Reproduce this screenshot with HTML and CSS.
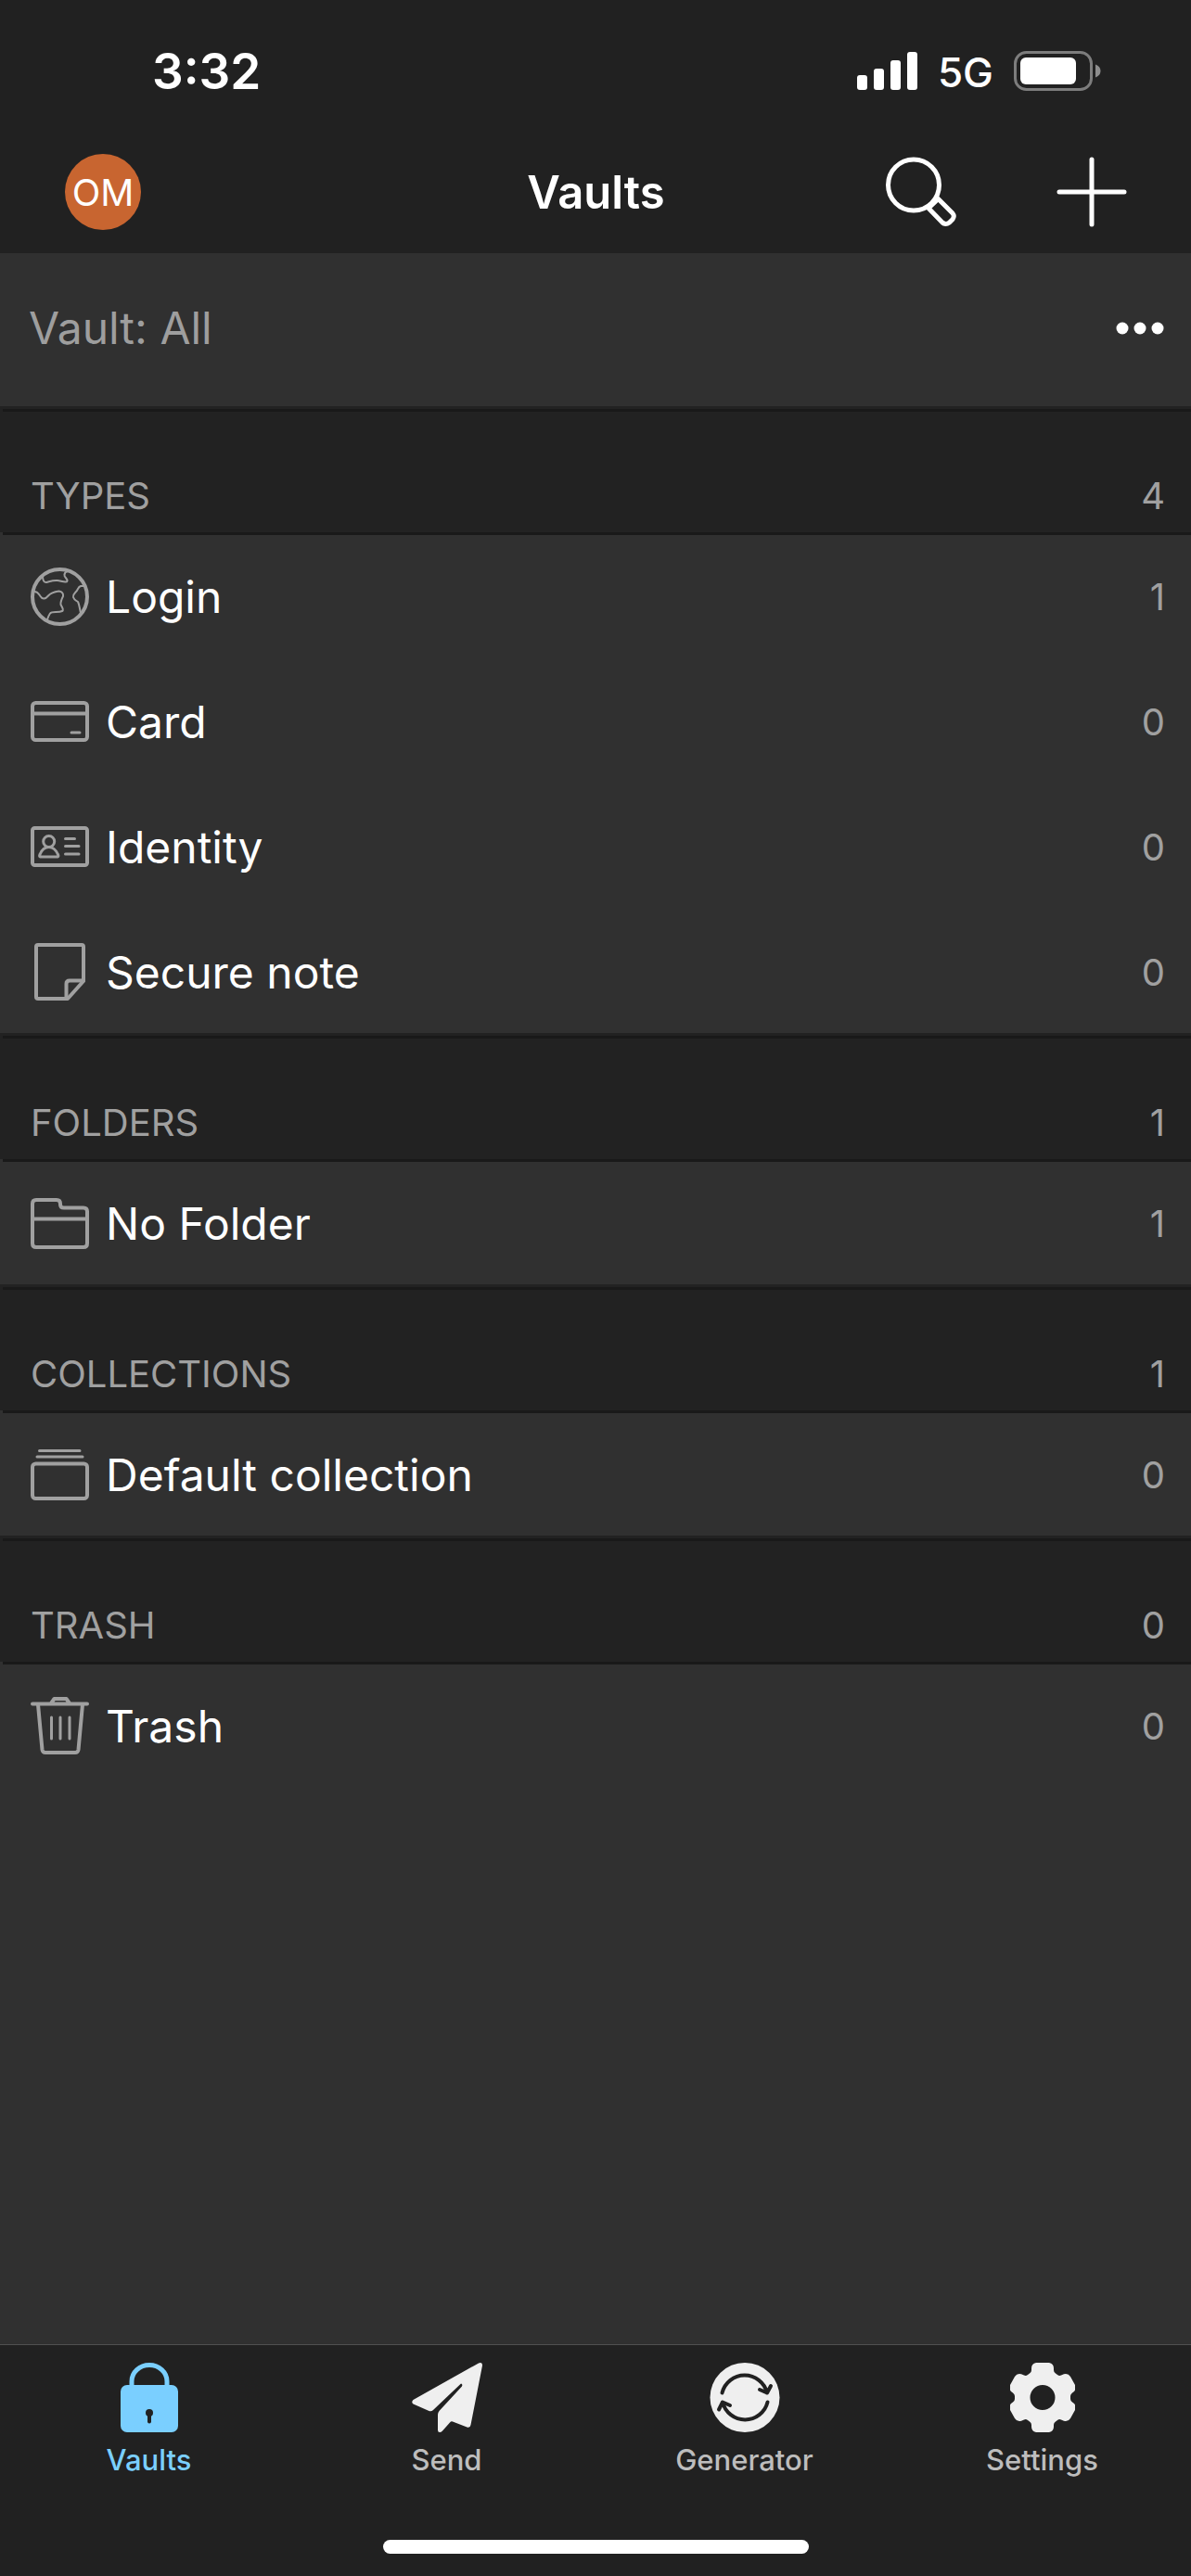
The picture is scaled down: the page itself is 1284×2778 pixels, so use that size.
FILE: index.html
```html
<!DOCTYPE html>
<html lang="en">
<head>
    <meta charset="UTF-8">
    <meta name="viewport" content="width=device-width, initial-scale=1.0">
    <title>Vaults</title>
    <link rel="stylesheet" href="styles.css">
</head>
<body>

<div class="status-bar">
    <span class="time">3:32</span>
    <div class="status-icons">
        <svg class="signal" width="65" height="42" viewBox="0 0 65 42" fill="#fff">
            <rect x="0" y="25" width="11" height="16" rx="3"/>
            <rect x="18" y="18" width="11" height="23" rx="3"/>
            <rect x="36" y="9" width="11" height="32" rx="3"/>
            <rect x="54" y="0" width="11" height="41" rx="3"/>
        </svg>
        <span class="network">5G</span>
        <svg class="battery" width="95" height="43" viewBox="0 0 95 43">
            <rect x="1.5" y="1.5" width="82" height="40" rx="12" fill="none" stroke="#7d7d7d" stroke-width="3"/>
            <rect x="7" y="7" width="60" height="29" rx="6" fill="#fff"/>
            <path d="M88 14.500q5.500 2 5.500 7t-5.500 7z" fill="#8d8d8d"/>
        </svg>
    </div>
</div>

<header class="nav-bar">
    <button class="avatar" aria-label="Account">OM</button>
    <h1>Vaults</h1>
    <div class="nav-actions">
        <button aria-label="Search">
            <svg width="76" height="76" viewBox="0 0 76 76" fill="none" stroke="#fff" stroke-width="5" stroke-linejoin="round">
                <circle cx="30" cy="30.500" r="27.500"/>
                <path d="M56.500 45.500L72 61Q74.500 64 72 67.500L68.500 71Q64.500 74 61 71L46 55.500Z"/>
            </svg>
        </button>
        <button aria-label="Add item">
            <svg width="76" height="76" viewBox="0 0 76 76" fill="none" stroke="#fff" stroke-width="5" stroke-linecap="round">
                <path d="M38 3V73M3 38H73"/>
            </svg>
        </button>
    </div>
</header>

<main>
    <div class="vault-filter">
        <span>Vault: All</span>
        <button aria-label="Filter vaults">
            <svg width="52" height="14" viewBox="0 0 52 14" fill="#fff">
                <circle cx="7" cy="7" r="6.500"/>
                <circle cx="26" cy="7" r="6.500"/>
                <circle cx="45" cy="7" r="6.500"/>
            </svg>
        </button>
    </div>

    <section>
        <h2>TYPES <span class="count">4</span></h2>
        <a class="row" href="#login">
            <svg class="icon" width="63" height="63" viewBox="0 0 63 63">
                <circle cx="31.500" cy="31.500" r="29.500"/>
                <path class="thin" d="M13 9C13 13 14 16.500 17 16C21 15 24 13.500 29 14C33 14.500 39 17 39.500 14.500C40 12 36 10.500 36.500 8C36.500 6 38 4.500 40 4"/>
                <path class="thin" d="M4 26C8 26 9 29 10.500 31C13 35 16 34 19 30.500C22 27 27 26 30.500 25.500C34 26 35.500 28 35 31C33 35 32 37 32.500 40C34 43 36 46 34 47C30 49 23 47 21 49.500C20 51 19 53 18 56"/>
                <path class="thin" d="M58 20H54C51 21 51 24 49 26C47 28 45.500 29 46 32C47 35 48 35 51 37C52.500 40 53 45 54 49"/>
            </svg>
            <span class="label">Login</span>
            <span class="count">1</span>
        </a>
        <a class="row" href="#card">
            <svg class="icon" width="63" height="44" viewBox="0 0 63 44">
                <rect x="2" y="2" width="59" height="40" rx="3.500"/>
                <path d="M2 13.500H61"/>
                <path class="line" d="M44 34H53"/>
            </svg>
            <span class="label">Card</span>
            <span class="count">0</span>
        </a>
        <a class="row" href="#identity">
            <svg class="icon" width="63" height="44" viewBox="0 0 63 44">
                <rect x="2" y="2" width="59" height="40" rx="2.500"/>
                <circle class="line" cx="19.700" cy="16.500" r="6"/>
                <path class="line" d="M10.500 33Q9 32.500 10 30.500C12 25.500 16 22.500 19.700 22.500S27.500 25.500 29.500 30.500Q30.500 32.500 29 33Z"/>
                <path class="line" d="M37.500 13.500H47.500M37.500 21.500H52M37.500 30H52"/>
            </svg>
            <span class="label">Identity</span>
            <span class="count">0</span>
        </a>
        <a class="row" href="#note">
            <svg class="icon" width="63" height="63" viewBox="0 0 63 63">
                <path d="M8 2H55Q57 2 57 4V41L40 60H8Q6 60 6 58V4Q6 2 8 2Z"/>
                <path d="M38.500 59V44Q38.500 40.500 42 40.500H57"/>
            </svg>
            <span class="label">Secure note</span>
            <span class="count">0</span>
        </a>
    </section>

    <section>
        <h2>FOLDERS <span class="count">1</span></h2>
        <a class="row" href="#no-folder">
            <svg class="icon" width="63" height="55" viewBox="0 0 63 55">
                <path d="M2 49V6Q2 2 6 2H28Q32 2 32 6V7Q32 10.500 36 10.500H57Q61 10.500 61 14.500V49Q61 53 57 53H6Q2 53 2 49ZM2 22.500H61"/>
            </svg>
            <span class="label">No Folder</span>
            <span class="count">1</span>
        </a>
    </section>

    <section>
        <h2>COLLECTIONS <span class="count">1</span></h2>
        <a class="row" href="#default-collection">
            <svg class="icon" width="63" height="55" viewBox="0 0 63 55">
                <path class="line" d="M9.500 1.500H53M7 8H56"/>
                <rect x="2" y="15.500" width="59" height="37.500" rx="3.500"/>
            </svg>
            <span class="label">Default collection</span>
            <span class="count">0</span>
        </a>
    </section>

    <section>
        <h2>TRASH <span class="count">0</span></h2>
        <a class="row" href="#trash">
            <svg class="icon" width="63" height="63" viewBox="0 0 63 63">
                <path d="M2 7.500H61M22 7L25.500 2H38.500L42 7M8 8L12.500 57Q13 60 16 60H48Q51 60 51.500 57L56 8"/>
                <path class="line" d="M22.500 22V45M32 22V45M42 22V45"/>
            </svg>
            <span class="label">Trash</span>
            <span class="count">0</span>
        </a>
    </section>
</main>

<nav class="tab-bar">
    <div class="tabs">
        <a class="tab active" href="#vaults">
            <svg width="62" height="75" viewBox="0 0 62 75">
                <path d="M12 26V20A19 17.500 0 0 1 50 20V26" fill="none" stroke="currentColor" stroke-width="5"/>
                <rect y="24" width="62" height="51" rx="7" fill="currentColor"/>
                <circle cx="31" cy="54" r="4" fill="#212121"/>
                <path d="M31 54V63.500" stroke="#212121" stroke-width="4" stroke-linecap="round"/>
            </svg>
            <span>Vaults</span>
        </a>
        <a class="tab" href="#send">
            <svg width="76" height="75" viewBox="0 0 76 75" fill="#efefef">
                <path d="M72 .500Q76-1 76 3L63.500 67Q63 70.500 59.500 69.500L44 63.500Q42.500 62.500 41 64.500L33 73.500Q31.500 75 30 75Q28 75 28 72.500V56Q28 54 29.500 52L54 25.500Q55 23 53 22.500L23 51Q21 53 18.500 52L1.500 44.500Q-1 42.500 1.500 40Z"/>
            </svg>
            <span>Send</span>
        </a>
        <a class="tab" href="#generator">
            <svg width="76" height="75" viewBox="0 0 76 75" fill="none" stroke="#212121" stroke-width="4" stroke-linecap="round" stroke-linejoin="round">
                <circle cx="38" cy="37.500" r="37.500" fill="#efefef" stroke="none"/>
                <path d="M13.500 32.500A25 25 0 0 1 62 32.500M54 29L62 32.500L66 25"/>
                <path d="M62.500 42.500A25 25 0 0 1 14 42.500M10 50.500L14 42.500L22 46"/>
            </svg>
            <span>Generator</span>
        </a>
        <a class="tab" href="#settings">
            <svg width="70" height="75" viewBox="0 0 70 75" fill="#efefef">
                <path fill-rule="evenodd" d="M28 0H42Q47 1 47 6V8Q47 10.500 49 11.500L51 13Q53 14.500 55 13.500L58 12.300Q62.500 11 65 15L70 24Q71.500 28 69 31L67 32.500Q65 34 65 36V39Q65 41 67 42.500L69 44Q71.500 47 70 51L65 60Q62.500 64 58 62.700L55 61.500Q53 60.500 51 62L49 63.500Q47 64.500 47 67V69Q47 74 42 75H28Q23 74 23 69V67Q23 64.500 21 63.500L19 62Q17 60.500 15 61.500L12 62.700Q7.500 64 5 60L0 51Q-1.500 47 1 44L3 42.500Q5 41 5 39V36Q5 34 3 32.500L1 31Q-1.500 28 0 24L5 15Q7.500 11 12 12.300L15 13.500Q17 14.500 19 13L21 11.500Q23 10.500 23 8V6Q23 1 28 0ZM35 24A13.500 13.500 0 1 0 35 51A13.500 13.500 0 1 0 35 24Z"/>
            </svg>
            <span>Settings</span>
        </a>
    </div>
    <div class="home-indicator"></div>
</nav>

</body>
</html>
```

FILE: styles.css
```css
* {
    box-sizing: border-box;
}
body {
    margin: 0;
    min-height: 100vh;
    display: flex;
    flex-direction: column;
    font-family: Inter, "Liberation Sans", sans-serif;
    font-size: 48px;
    color: #fff;
    background-color: #303030;
}
a {
    color: inherit;
    text-decoration: none;
}
button {
    padding: 0;
    border: none;
    background: none;
    color: inherit;
    font-family: inherit;
    cursor: pointer;
}
svg {
    display: block;
    flex-shrink: 0;
}

/* Status bar */
.status-bar {
    height: 141px;
    padding: 12px 96px 0 164px;
    display: flex;
    align-items: center;
    justify-content: space-between;
    background-color: #212121;
}
.time {
    font-size: 53px;
    font-weight: 600;
}
.status-icons {
    display: flex;
    align-items: center;
    gap: 22px;
}
.network {
    padding-top: 2px;
    font-size: 44px;
    font-weight: 500;
}

/* Navigation bar */
.nav-bar {
    height: 132px;
    padding: 0 69px 0 70px;
    display: grid;
    grid-template-columns: 1fr auto 1fr;
    align-items: center;
    background-color: #212121;
}
.avatar {
    width: 82px;
    height: 82px;
    border-radius: 50%;
    background-color: #c86530;
    font-size: 40px;
}
h1 {
    margin: 0;
    font-size: 49px;
    font-weight: 600;
}
.nav-actions {
    display: flex;
    justify-content: flex-end;
    gap: 108px;
}

/* Vault list */
main {
    flex: 1;
}
.vault-filter {
    height: 165px;
    padding: 0 29px 4px 31px;
    display: flex;
    align-items: center;
    justify-content: space-between;
    color: #9e9e9e;
}
.vault-filter button {
    color: #fff;
}
h2 {
    height: 136px;
    margin: 0;
    padding: 0 28px 0 33px;
    display: flex;
    align-items: flex-end;
    justify-content: space-between;
    font-size: 40px;
    font-weight: 400;
    line-height: 78px;
    color: #a0a0a0;
    background: linear-gradient(#191919, #191919) 3px 3px / 100% 3px no-repeat #222;
}
.row {
    height: 135px;
    padding: 3px 28px 0 33px;
    display: flex;
    align-items: center;
    gap: 18px;
}
h2 + .row {
    background: linear-gradient(#191919, #191919) 3px 0 / 100% 3px no-repeat;
}
.icon {
    fill: none;
    stroke: #a0a0a0;
    stroke-width: 4;
    stroke-linecap: round;
    stroke-linejoin: round;
}
.icon .line {
    stroke-width: 3;
}
.icon .thin {
    stroke-width: 2;
}
.label {
    flex: 1;
}
.count {
    font-size: 40px;
    color: #a0a0a0;
}

/* Tab bar */
.tab-bar {
    height: 250px;
    padding-bottom: 24px;
    display: flex;
    flex-direction: column;
    align-items: center;
    justify-content: space-between;
    border-top: 1px solid #505050;
    background-color: #212121;
}
.tabs {
    width: 100%;
    display: grid;
    grid-template-columns: repeat(4, 1fr);
    padding-top: 19px;
}
.tab {
    display: flex;
    flex-direction: column;
    align-items: center;
    gap: 12px;
    font-size: 31px;
    font-weight: 500;
    line-height: 36px;
    color: #bdbdbd;
}
.tab.active {
    color: #7acfff;
}
.home-indicator {
    width: 459px;
    max-width: 60%;
    height: 15px;
    border-radius: 8px;
    background-color: #fff;
}
```
